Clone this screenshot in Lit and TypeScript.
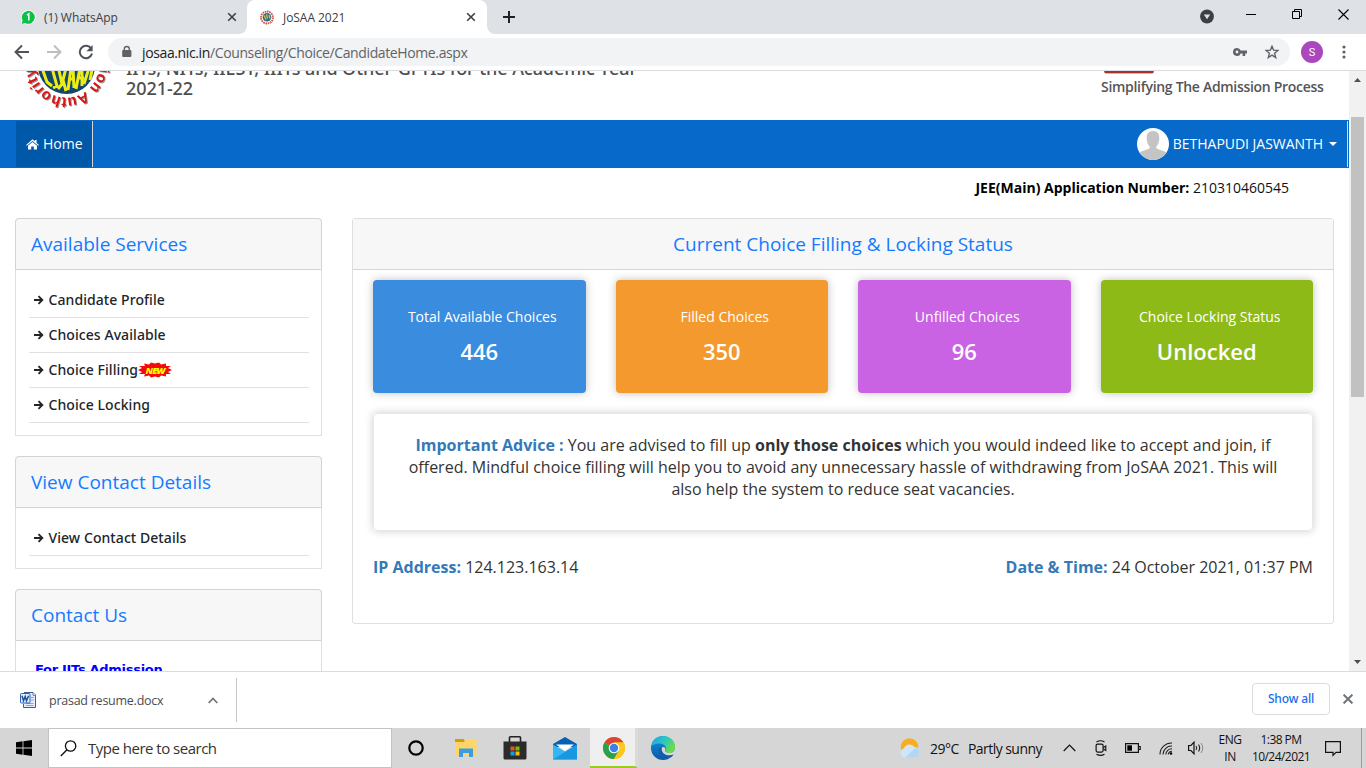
import { LitElement, html, svg, css } from "lit";
import { customElement } from "lit/decorators.js";

const closeX = svg`<path d="M1.2 1.2 8.8 8.8M8.8 1.2 1.2 8.8" stroke="currentColor" stroke-width="1.6" fill="none"/>`;

@customElement("browser-chrome")
class BrowserChrome extends LitElement {
  static styles = css`
    :host { display: block; font-family: "Open Sans", "Noto Sans", sans-serif; }
    svg { display: block; flex: none; }
    .strip { display: flex; height: 34px; background: #dee1e6; color: #3c4043; }
    .tab { display: flex; align-items: center; box-sizing: border-box; height: 34px; font-size: 12px; }
    .idle { width: 247px; padding: 0 10px 0 21px; }
    .active { width: 240px; padding: 0 11px 0 13px; background: #fff; border-radius: 8px 8px 0 0; }
    .label { flex: 1; margin-left: 8px; white-space: nowrap; letter-spacing: -0.05px; }
    .active .label { margin-left: 9px; }
    .foot { width: 8px; align-self: flex-end; }
    .left { margin-left: -8px; }
    .right { margin-right: -8px; }
    .plus { margin: 11px 0 0 16px; }
    .win { margin-left: auto; display: grid; grid-template-columns: 30px 46px 46px 46px; justify-items: center; align-items: start; width: 168px; color: #000; }
    .win svg { margin-top: 9px; }
    .win .menu { justify-self: start; margin-left: 2px; }
    .bar { display: flex; align-items: center; height: 36px; border-bottom: 1px solid #dadce0; background: #fff; }
    .nav { display: grid; grid-template-columns: 44px 20px 44px; justify-items: center; width: 108px; }
    .url { display: flex; align-items: center; width: 1182px; height: 28px; border-radius: 14px; background: #f1f3f4; padding: 0 11px 0 13px; box-sizing: border-box; font-size: 14px; color: #5f6368; }
    .addr { flex: 1; margin-left: 9px; letter-spacing: -0.38px; white-space: nowrap; }
    .host { color: #202124; }
    .key { margin-right: 17px; }
    .avatar { display: flex; align-items: center; justify-content: center; width: 22px; height: 22px; margin-left: 11px; border-radius: 50%; background: #ab47bc; color: #fff; font: 11px "Roboto", sans-serif; }
    .dots { margin-left: 19px; }
  `;
  render() {
    return html`
      <div class="strip">
        <div class="tab idle">
          <svg width="15" height="15" viewBox="0 0 15 15"><path d="M0 14.5 1 10.6A7.2 7.2 0 1 1 4 13.6Z" fill="#fff"/><path d="M.6 14 1.6 10.4A6.5 6.5 0 1 1 4.2 13Z" fill="#0bc143"/><path d="M6 5.2 7.8 3.8V10.4" stroke="#fff" stroke-width="1.5" fill="none"/></svg>
          <span class="label">(1) WhatsApp</span>
          <svg width="10" height="10" viewBox="0 0 10 10">${closeX}</svg>
        </div>
        <svg class="foot left" width="8" height="8" viewBox="0 0 8 8"><path d="M8 0V8H0A8 8 0 0 0 8 0Z" fill="#fff"/></svg>
        <div class="tab active">
          <svg width="14" height="15" viewBox="0 0 14 15"><circle cx="7" cy="7.5" r="6" fill="none" stroke="#c9504a" stroke-width="1.8" stroke-dasharray="1.6 .7"/><circle cx="7" cy="7.2" r="4.3" fill="#3b6d7c"/><path d="M4.2 5.5 6 9.5M6.5 4.5 7.5 8.5M9 5 10 8.5" stroke="#d9d53a" stroke-width="1.1"/></svg>
          <span class="label">JoSAA 2021</span>
          <svg width="10" height="10" viewBox="0 0 10 10">${closeX}</svg>
        </div>
        <svg class="foot right" width="8" height="8" viewBox="0 0 8 8"><path d="M0 0V8H8A8 8 0 0 1 0 0Z" fill="#fff"/></svg>
        <svg class="plus" width="12" height="12" viewBox="0 0 12 12"><path d="M6 0V12M0 6H12" stroke="#202124" stroke-width="2"/></svg>
        <div class="win">
          <svg class="menu" width="14" height="15" viewBox="0 0 14 15"><circle cx="7" cy="7.500" r="6.900" fill="#3c4043"/><path d="M3.800 5.500H10.200L7 10.200Z" fill="#dee1e6"/></svg>
          <svg width="10" height="10" viewBox="0 0 10 10"><path d="M0 5.500H10" stroke="currentColor"/></svg>
          <svg width="10" height="10" viewBox="0 0 10 10"><path d="M.5 2.500H7.500V9.500H.5ZM2.500 2.500V.5H9.500V7.500H7.500" fill="none" stroke="currentColor"/></svg>
          <svg width="11" height="11" viewBox="0 0 11 11"><path d="M.5.5 10.500 10.500M10.500.5.5 10.500" stroke="currentColor" stroke-width="1.100"/></svg>
        </div>
      </div>
      <div class="bar">
        <div class="nav">
          <svg width="16" height="16" viewBox="0 0 16 16"><path d="M15 8H2M8 1.500 1.500 8 8 14.500" fill="none" stroke="#4f5357" stroke-width="1.900"/></svg>
          <svg width="16" height="16" viewBox="0 0 16 16"><path d="M1 8H14M8 1.500 14.500 8 8 14.500" fill="none" stroke="#bcbec1" stroke-width="1.900"/></svg>
          <svg width="16" height="16" viewBox="0 0 16 16"><path d="M13.300 4.800A6.200 6.200 0 1 0 14 9.600" fill="none" stroke="#4f5357" stroke-width="2"/><path d="M14.600 1V7.200H8.400Z" fill="#4f5357"/></svg>
        </div>
        <div class="url">
          <svg width="12" height="14" viewBox="0 0 12 14"><path d="M3.300 6V4A2.500 2.500 0 0 1 8.300 4V6" fill="none" stroke="#5f6368" stroke-width="1.400"/><rect x="1.200" y="5" width="9.200" height="7" rx="1" fill="#5f6368"/></svg>
          <span class="addr"><span class="host">josaa.nic.in</span>/Counseling/Choice/CandidateHome.aspx</span>
          <svg class="key" width="16" height="10" viewBox="0 0 16 10"><path fill-rule="evenodd" d="M5 1A4 4 0 1 0 8.700 6.500H10.600V9H13.200V6.500H15V3.500H8.700A4 4 0 0 0 5 1ZM5 3.600A1.400 1.400 0 1 1 5 6.400 1.400 1.400 0 0 1 5 3.600Z" fill="#5f6368"/></svg>
          <svg width="14" height="14" viewBox="0 0 14 14"><path d="M7 1.200 8.600 5.200 13 5.500 9.600 8.300 10.700 12.600 7 10.200 3.300 12.600 4.400 8.300 1 5.500 5.400 5.200Z" fill="none" stroke="#5f6368" stroke-width="1.400"/></svg>
        </div>
        <div class="avatar">S</div>
        <svg class="dots" width="4" height="14" viewBox="0 0 4 14"><g fill="#5f6368"><circle cx="2" cy="2" r="1.600"/><circle cx="2" cy="7" r="1.600"/><circle cx="2" cy="12" r="1.600"/></g></svg>
      </div>`;
  }
}

@customElement("service-panel")
class ServicePanel extends LitElement {
  static properties = { heading: {}, items: { attribute: false }, fresh: {}, link: {} };
  declare heading: string;
  declare items: string[];
  declare fresh: string;
  declare link: string;
  static styles = css`
    :host { display: block; }
    .panel { box-sizing: border-box; width: 307px; border: 1px solid #dfdfdf; border-radius: 4px 4px 0 0; }
    .head { margin: -1px -1px 0; box-sizing: border-box; height: 52px; border: 1px solid #d3d3d3; border-radius: 4px 4px 0 0; background: #f7f7f7; padding: 0 15px; font-size: 19px; line-height: 50px; color: #147bff; }
    .body { padding: 13px 12px 12px 13px; }
    .row { display: flex; align-items: center; box-sizing: border-box; height: 35px; border-bottom: 1px solid #e1e1e1; padding-left: 4px; font-family: "Noto Sans", "Open Sans", sans-serif; font-size: 14px; font-weight: 500; color: #212529; white-space: nowrap; }
    .row svg { display: block; }
    .name { margin: -2px 0 0 4.500px; letter-spacing: 0.07px; }
    .link { margin: 6px 0 0 6px; font: bold 13px/20px "DejaVu Sans", sans-serif; color: #00f; letter-spacing: -0.3px; }
  `;
  render() {
    return html`<div class="panel">
      <div class="head">${this.heading}</div>
      <div class="body">
        ${(this.items ?? []).map(n => html`<div class="row">
          <svg width="11" height="10" viewBox="0 0 11 10"><path d="M1 5H9M5.500 1.200 9.300 5 5.500 8.800" fill="none" stroke="#212529" stroke-width="1.900"/></svg>
          <span class="name">${n}</span>
          ${n === this.fresh ? html`<svg width="34" height="16" viewBox="0 0 34 16"><path d="M0 8 4 6 1 4 7 4 6 1.500 11 2.500 13 .500 17 1.500 21 .500 23 2.500 28 1.500 28 4 33 4 30 6 34 8 30 10 33 12 28 12 28 14.500 23 13.500 21 15.500 17 14.500 13 15.500 11 13.500 6 14.500 7 12 1 12 4 10Z" fill="#f50a0a"/><text x="7.500" y="11.500" font-family="Open Sans" font-weight="800" font-style="italic" font-size="9.500" textLength="20" fill="#ff0">NEW</text></svg>` : ""}
        </div>`)}
        ${this.link ? html`<div class="link">${this.link}</div>` : ""}
      </div>
    </div>`;
  }
}

const stats = [
  ["blue", "Total Available Choices", "446"],
  ["orange", "Filled Choices", "350"],
  ["purple", "Unfilled Choices", "96"],
  ["green", "Choice Locking Status", "Unlocked"],
];

@customElement("josaa-page")
class JosaaPage extends LitElement {
  static styles = css`
    :host { display: flex; height: 600px; overflow: hidden; background: #fff; font-family: "Open Sans", "Noto Sans", sans-serif; color: #212529; }
    svg { display: block; flex: none; }
    .view { width: 1349px; height: 600px; overflow: hidden; }
    .banner { display: flex; height: 49px; overflow: hidden; }
    .logo { margin-left: 16px; }
    .ring { filter: drop-shadow(1px 1px 0.5px #999); }
    .title { margin: -13px 0 0 10px; width: 530px; font-family: "Noto Sans", "Open Sans", sans-serif; font-size: 18px; line-height: 20px; font-weight: 500; color: #4e4e4e; white-space: nowrap; letter-spacing: -0.07px; }
    .tag { margin-left: auto; width: 248px; font-size: 14px; font-weight: 600; color: #555; }
    .mark { box-sizing: border-box; width: 50px; height: 3px; margin-left: 3px; border: 1px solid #bbb; border-top: 2px solid #a8322d; border-radius: 0 0 5px 5px; }
    .motto { margin-top: 3px; line-height: 20px; letter-spacing: -0.3px; white-space: nowrap; }
    .nav { display: flex; align-items: center; box-sizing: border-box; height: 48px; background: #0769c9; color: #fff; font-size: 14px; padding-left: 16px; }
    .home { display: flex; align-items: center; box-sizing: border-box; width: 77px; height: 46px; padding-left: 10px; background: #0058a9; border-right: 1px solid #d5d9de; }
    .home span { margin: -2px 0 0 4px; }
    .user { display: flex; align-items: center; box-sizing: border-box; height: 46px; margin-left: auto; padding-right: 10px; margin-right: 1px; border-right: 1px solid #cfe0f3; }
    .uname { margin: -2px 6px 0 4px; letter-spacing: -0.03px; white-space: nowrap; }
    .appno { margin: 10px 60px 0 0; text-align: right; line-height: 20px; font-size: 14px; color: #111; white-space: nowrap; }
    .appno b { color: #000; }
    .cols { display: flex; gap: 30px; margin: 20px 0 0 15px; }
    .side { display: flex; flex-direction: column; gap: 20px; width: 307px; }
    .status { box-sizing: border-box; width: 982px; height: 406px; border: 1px solid #dfdfdf; border-radius: 3px; }
    .shead { height: 50px; border-bottom: 1px solid #d6d6d6; background: #f7f7f7; text-align: center; line-height: 50px; font-size: 19px; color: #147bff; }
    .tiles { display: grid; grid-template-columns: repeat(4, 1fr); gap: 30px; margin: 10px 20px 0; }
    .tile { height: 113px; box-sizing: border-box; padding-top: 26px; border-radius: 4px; text-align: center; color: #fff; box-shadow: 0 0 8px rgba(0,0,0,.25); }
    .blue { background: #3a8cdf; } .orange { background: #f3992e; } .purple { background: #c962e3; } .green { background: #8eba17; }
    .cap { padding-left: 6px; font-size: 14px; line-height: 22px; white-space: nowrap; }
    .num { margin-top: 8px; font-size: 22px; line-height: 30px; font-weight: 600; }
    .advice { box-sizing: border-box; height: 118px; margin: 20px 20px 0; padding: 20px 30px 0; border: 1px solid #e8e8e8; border-radius: 4px; text-align: center; font-size: 16px; line-height: 22px; color: #333; box-shadow: 0 0 8px rgba(0,0,0,.2); }
    .advice div { white-space: nowrap; }
    .key { font-weight: 700; color: #337ab7; }
    .em { font-weight: 700; }
    .meta { display: flex; justify-content: space-between; margin: 24px 20px 0; font-size: 16px; line-height: 24px; color: #333; }
    .scroll { display: flex; flex-direction: column; align-items: center; width: 17px; background: #f1f1f1; }
    .up { margin-top: 7px; }
    .thumb { width: 13px; height: 280px; margin: 35px 0 auto; background: #c1c1c1; }
    .down { margin-bottom: 7px; }
  `;
  render() {
    return html`
      <div class="view">
        <div class="banner">
          <svg class="logo" width="100" height="49" viewBox="16 71 100 49">
            <defs>
              <clipPath id="globe"><circle cx="66.500" cy="65.500" r="28.500"/></clipPath>
              <path id="ring" d="M99 65A32.500 32.500 0 0 1 34 65"/>
            </defs>
            <circle cx="66.500" cy="65.500" r="28.500" fill="#15466f"/>
            <g clip-path="url(#globe)" fill="none" stroke="#eded14" stroke-width="3">
              <path d="M42 68 47 82 52 86M52 68 57 86 53 88M58 66 62 84 58 89M66 68 63 80 66 91M71 68 68 90M73 68 74 88M70 79H75M80 68 76 89M82 68 82 86M78 78H84M89 68 84 84M92 70 90 80"/>
            </g>
            <text class="ring" font-family="Liberation Sans" font-weight="700" font-size="15" fill="#db1414"><textPath href="#ring" startOffset="3" textLength="96">ion Authority</textPath></text>
          </svg>
          <div class="title">IITs, NITs, IIEST, IIITs and Other-GFTIs for the Academic Year<br>2021-22</div>
          <div class="tag"><div class="mark"></div><div class="motto">Simplifying The Admission Process</div></div>
        </div>
        <div class="nav">
          <div class="home">
            <svg width="13" height="11" viewBox="0 0 13 11"><path d="M6.500.300 8.800 2.300V1H10.600V3.900L12.900 5.900 12.200 6.700 6.500 1.900.800 6.700.100 5.900ZM6.500 2.900 11 6.700V10.600H7.800V7.500H5.200V10.600H2V6.700Z" fill="#fff"/></svg>
            <span>Home</span>
          </div>
          <div class="user">
            <svg width="32" height="32" viewBox="0 0 32 32"><defs><clipPath id="face"><circle cx="16" cy="16" r="16"/></clipPath></defs><circle cx="16" cy="16" r="16" fill="#fff"/><g clip-path="url(#face)" fill="#c4c4c4"><path d="M16 3C20.600 3 22.500 6 22.300 10.500 22.200 14 21 17 19.300 18.700V20C21 22 28 22.500 31 26V33H1V26C4 22.500 11 22 12.700 20V18.700C11 17 9.800 14 9.700 10.500 9.500 6 11.400 3 16 3Z"/></g></svg>
            <span class="uname">BETHAPUDI JASWANTH</span>
            <svg width="8" height="4" viewBox="0 0 8 4"><path d="M0 0H8L4 4Z" fill="#fff"/></svg>
          </div>
        </div>
        <div class="appno"><b>JEE(Main) Application Number:</b> 210310460545</div>
        <div class="cols">
          <div class="side">
            <service-panel heading="Available Services" .items=${["Candidate Profile", "Choices Available", "Choice Filling", "Choice Locking"]} fresh="Choice Filling"></service-panel>
            <service-panel heading="View Contact Details" .items=${["View Contact Details"]}></service-panel>
            <service-panel heading="Contact Us" link="For IITs Admission"></service-panel>
          </div>
          <div class="status">
            <div class="shead">Current Choice Filling &amp; Locking Status</div>
            <div class="tiles">
              ${stats.map(([c, l, v]) => html`<div class="tile ${c}"><div class="cap">${l}</div><div class="num">${v}</div></div>`)}
            </div>
            <div class="advice">
              <div><span class="key">Important Advice :</span> You are advised to fill up <span class="em">only those choices</span> which you would indeed like to accept and join, if</div>
              <div>offered. Mindful choice filling will help you to avoid any unnecessary hassle of withdrawing from JoSAA 2021. This will</div>
              <div>also help the system to reduce seat vacancies.</div>
            </div>
            <div class="meta">
              <div><span class="key">IP Address:</span> 124.123.163.14</div>
              <div><span class="key">Date &amp; Time:</span> 24 October 2021, 01:37 PM</div>
            </div>
          </div>
        </div>
      </div>
      <div class="scroll">
        <svg class="up" width="7" height="4" viewBox="0 0 7 4"><path d="M0 4H7L3.500 0Z" fill="#505050"/></svg>
        <div class="thumb"></div>
        <svg class="down" width="7" height="4" viewBox="0 0 7 4"><path d="M0 0H7L3.500 4Z" fill="#505050"/></svg>
      </div>`;
  }
}

@customElement("download-bar")
class DownloadBar extends LitElement {
  static styles = css`
    :host { display: flex; align-items: center; box-sizing: border-box; height: 57px; border-top: 1px solid #dadce0; background: #fff; font-family: "Open Sans", "Noto Sans", sans-serif; }
    svg { display: block; flex: none; }
    .file { display: flex; align-items: center; box-sizing: border-box; width: 237px; height: 44px; padding: 0 18px 0 20px; border-right: 1px solid #c6c8cb; font-size: 12.500px; color: #4a4d51; }
    .name { flex: 1; margin-left: 13px; letter-spacing: -0.25px; }
    .all { margin: -2px 0 0 auto; box-sizing: border-box; width: 78px; height: 32px; border: 1px solid #dadce0; border-radius: 4px; text-align: center; font-family: "Noto Sans", "Open Sans", sans-serif; font-size: 12px; line-height: 30px; font-weight: 500; letter-spacing: -0.15px; color: #1a6ce8; }
    .x { margin: -2px 13px 0 13px; color: #70757a; }
  `;
  render() {
    return html`
      <div class="file">
        <svg width="16" height="16" viewBox="0 0 16 16"><path d="M4 .500H13L15.500 3V15.500H3.500V12" fill="#e6eefb" stroke="#3c5f9a"/><path d="M13 .500V3.300H15.500" fill="#fff" stroke="#3c5f9a" stroke-width=".8"/><path d="M11 5.500H14M11 8H14M6 11.500H13.500M6 13.500H13.500" stroke="#85a6d8"/><rect x=".500" y="1.500" width="9.500" height="9.500" rx="1" fill="#e9f0fc" stroke="#2b5fb4"/><path d="M2 3.800 3.500 8.800 5.200 4.500 6.500 8.800 8.600 3.800" fill="none" stroke="#1c4f9f" stroke-width="1.500"/></svg>
        <span class="name">prasad resume.docx</span>
        <svg width="10" height="7" viewBox="0 0 10 7"><path d="M.700 6 5 1.500 9.300 6" fill="none" stroke="#70757a" stroke-width="1.800"/></svg>
      </div>
      <div class="all">Show all</div>
      <svg class="x" width="10" height="10" viewBox="0 0 10 10"><path d="M.600.600 9.400 9.400M9.400.600.600 9.400" stroke="currentColor" stroke-width="2"/></svg>`;
  }
}

@customElement("task-bar")
class TaskBar extends LitElement {
  static styles = css`
    :host { display: flex; height: 40px; background: #d6d6d6; font-family: "Open Sans", "Noto Sans", sans-serif; color: #111; }
    svg { display: block; flex: none; }
    .start { display: flex; align-items: center; justify-content: center; width: 48px; }
    .search { display: flex; align-items: center; box-sizing: border-box; width: 344px; padding-left: 11px; border: 1px solid #c3c3c3; background: #fff; font-size: 15px; color: #333; }
    .search span { margin-left: 11px; letter-spacing: -0.5px; }
    .apps { display: grid; grid-template-columns: 49px 49px 50px 50px 48px 50px; }
    .app { display: flex; align-items: center; justify-content: center; box-sizing: border-box; }
    .first { padding-right: 2px; }
    .on { background: #efefef; border-bottom: 2px solid #9acb22; padding-top: 2px; border-right: 3px solid #d9dcd5; padding-left: 2px; }
    .tray { display: grid; grid-template-columns: 24px 31px 100px 32px 32px 32px 33px 28px 38px 64px 42px 12px; margin-left: auto; align-items: center; justify-items: center; font-size: 14px; white-space: nowrap; }
    .deg { justify-self: start; margin-left: 8px; letter-spacing: -0.5px; }
    .sky { justify-self: start; margin-left: 15px; letter-spacing: -0.55px; }
    .two { font-size: 12px; line-height: 17px; text-align: center; letter-spacing: -0.55px; }
    .clock { padding-left: 2px; }
    .lang { padding-left: 2px; }
    .edge { justify-self: end; align-self: stretch; width: 5px; border-left: 1px solid #9b9b9b; box-sizing: border-box; }
  `;
  render() {
    return html`
      <div class="start"><svg width="16" height="16" viewBox="0 0 16 16"><path d="M0 2.200 6.600 1.300V7.500H0ZM7.400 1.200 16 0V7.500H7.400ZM0 8.400H6.600V14.700L0 13.800ZM7.400 8.400H16V16L7.400 14.800Z"/></svg></div>
      <div class="search">
        <svg width="17" height="17" viewBox="0 0 17 17"><circle cx="10.600" cy="6" r="5.200" fill="none" stroke="#111" stroke-width="1.300"/><path d="M7 9.800.800 16" stroke="#111" stroke-width="1.400"/></svg>
        <span>Type here to search</span>
      </div>
      <div class="apps">
        <div class="app first"><svg width="16" height="16" viewBox="0 0 16 16"><circle cx="8" cy="8" r="6.700" fill="none" stroke="#000" stroke-width="2.200"/></svg></div>
        <div class="app"><svg width="22" height="20" viewBox="0 0 22 20"><path d="M0 1H8.500L10 3V5H0Z" fill="#d99a07"/><path d="M0 4H9L10.500 2H21.500V18H0Z" fill="#ffd567"/><path d="M4 10.500H18V19H14V15H8V19H4Z" fill="#3d9be0"/></svg></div>
        <div class="app"><svg width="24" height="24" viewBox="0 0 24 24"><path d="M6.500 6V1.500Q6.500.800 7.300.800H16.700Q17.500.800 17.500 1.500V6" fill="none" stroke="#222" stroke-width="1.600"/><path d="M.500 5.500H23.500V22Q23.500 23.500 22 23.500H2Q.500 23.500.500 22Z" fill="#2b2b2b"/><path d="M7.500 10.500H11.500V14.500H7.500Z" fill="#f25022"/><path d="M12.500 10.500H16.500V14.500H12.500Z" fill="#7fba00"/><path d="M7.500 15.500H11.500V19.500H7.500Z" fill="#00a4ef"/><path d="M12.500 15.500H16.500V19.500H12.500Z" fill="#ffb900"/></svg></div>
        <div class="app"><svg width="24" height="23" viewBox="0 0 24 23"><path d="M0 7 12 0 24 7V10H0Z" fill="#0760b2"/><path d="M0 7.500 12 14.500 24 7.500V22.500H0Z" fill="#35b8f1"/><path d="M3 7.600H21L12 14Z" fill="#fff"/><path d="M0 22.500 24 7.500V22.500Z" fill="#1798e0"/></svg></div>
        <div class="app on"><svg width="22" height="22" viewBox="0 0 22 22"><circle cx="11" cy="11" r="11" fill="#fbc116"/><path d="M11 11 1.470 5.500A11 11 0 0 0 11 22L15.800 13.700Z" fill="#2da04e"/><path d="M11 11 1.470 5.500A11 11 0 0 1 20.530 5.500H11Z" fill="#dc4437"/><path d="M20.530 5.500H11V11L15.800 13.700 11 22A11 11 0 0 0 20.530 5.500Z" fill="#fdc81d"/><circle cx="11" cy="11" r="5.300" fill="#fff"/><circle cx="11" cy="11" r="4.200" fill="#3f7fe8"/></svg></div>
        <div class="app"><svg width="24" height="24" viewBox="0 0 24 24"><defs><linearGradient id="e1" x1="0" y1="0" x2="1" y2=".5"><stop offset="0" stop-color="#1fa2df"/><stop offset=".55" stop-color="#2bc6c4"/><stop offset="1" stop-color="#6bdd45"/></linearGradient><linearGradient id="e2" x1="0" y1="0" x2="0" y2="1"><stop offset="0" stop-color="#1490df"/><stop offset="1" stop-color="#0c59a4"/></linearGradient></defs><circle cx="12" cy="12" r="12" fill="url(#e2)"/><path d="M.300 10C1.500 3.500 6 0 12 0 19 0 24 5 24 11 24 15 21 17 18 17 15 17 13.500 15.800 14.300 14.700 16 12 14 7.500 8.500 7.500 4.500 7.500 1 9.500.300 10Z" fill="url(#e1)"/><path d="M10.500 11C9 16 13.500 19.500 18 19.300 20 19.200 22 18 22.400 18.200 22 19.500 21 20.500 20 21.200 14 23 7.500 19.500 7.800 14 7.900 12 9 10.800 10.500 11Z" fill="#135da9"/><path d="M11 11.500C13 10 15 12 14.200 14.500 13.500 15.500 15 17 18 17 21 17 23.500 15.500 24 12.500 25 15 24 17 22.300 18.500 17 20.500 9.500 18 11 11.500Z" fill="#d7d7d7"/></svg></div>
      </div>
      <div class="tray">
        <svg width="22" height="20" viewBox="0 0 22 20"><circle cx="10.500" cy="9" r="8.800" fill="#f9ae20"/><path d="M5.500 19.500A4.800 4.800 0 0 1 5 10.200 6 6 0 0 1 15.500 9 5.300 5.300 0 0 1 16.500 19.500Z" fill="#cfe6f8"/><path d="M6 19.500 17 9.500A5.200 5.200 0 0 1 16.500 19.500Z" fill="#b3d6f1"/></svg>
        <span class="deg">29°C</span>
        <span class="sky">Partly sunny</span>
        <svg width="13" height="8" viewBox="0 0 13 8"><path d="M.700 7 6.500 1.200 12.300 7" fill="none" stroke="#111" stroke-width="1.200"/></svg>
        <svg width="12" height="16" viewBox="0 0 12 16"><rect x="1.100" y="4.100" width="7" height="8" rx="1.500" fill="none" stroke="#111" stroke-width="1.200"/><path d="M8.500 7.500 10.800 6V10.500L8.500 9M1.500 2Q5.500-.500 9.500 2M1.500 14.200Q5.500 16.500 9.500 14.200" fill="none" stroke="#111" stroke-width="1.100"/></svg>
        <svg width="16" height="10" viewBox="0 0 16 10"><path d="M.600.600H13.400V9.400H.600ZM14 3.500H15.200V6.500H14" fill="none" stroke="#111" stroke-width="1.200"/><path d="M2.300 2.300H7V7.700H2.300Z"/></svg>
        <svg width="14" height="13" viewBox="0 0 14 13"><g fill="none" stroke="#222" stroke-width="1.100"><path d="M1 12.500A11.500 11.500 0 0 1 13 1"/><path d="M4 12.500A8.500 8.500 0 0 1 13 4"/><path d="M6.800 12.500A6 6 0 0 1 13 6.800"/><path d="M9.200 12.500A3.500 3.500 0 0 1 13 9.300"/></g><circle cx="12" cy="11.500" r="1.300"/></svg>
        <svg width="17" height="14" viewBox="0 0 17 14"><path d="M.600 4.500H3L6 1.200V12.800L3 9.500H.600Z" fill="none" stroke="#111" stroke-width="1.200"/><path d="M8 5Q9.500 7 8 9M10.500 3.500Q12.800 7 10.500 10.500" fill="none" stroke="#222" stroke-width="1.100"/><path d="M13 2Q16.500 7 13 12" fill="none" stroke="#888"/></svg>
        <div class="two lang">ENG<br>IN</div>
        <div class="two clock">1:38 PM<br>10/24/2021</div>
        <svg width="16" height="17" viewBox="0 0 16 17"><path d="M.600 1.600H15.400V12.400H11L8 15.400V12.400H.600Z" fill="none" stroke="#111" stroke-width="1.200"/></svg>
        <div class="edge"></div>
      </div>`;
  }
}

@customElement("app-root")
class AppRoot extends LitElement {
  static styles = css`
    :host { display: flex; flex-direction: column; width: 1366px; height: 768px; overflow: hidden; background: #fff; }
  `;
  render() {
    return html`<browser-chrome></browser-chrome><josaa-page></josaa-page><download-bar></download-bar><task-bar></task-bar>`;
  }
}
